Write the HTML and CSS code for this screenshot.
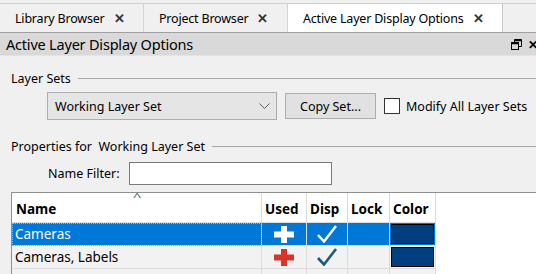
FILE: index.html
```
<!DOCTYPE html>
<html>
<head>
<meta charset="utf-8">
<link rel="stylesheet" href="styles.css">
</head>
<body>
<div class="tabbar">
  <div class="tab"><span class="tab-label">Library Browser</span><span class="tab-x">✕</span></div>
  <div class="tab"><span class="tab-label">Project Browser</span><span class="tab-x">✕</span></div>
  <div class="tab tab-active"><span class="tab-label">Active Layer Display Options</span><span class="tab-x">✕</span></div>
</div>
<div class="panel-head">
  <span class="panel-title">Active Layer Display Options</span>
  <span class="panel-tools">
    <svg class="restore" width="11" height="11" viewBox="0 0 11 11"><path d="M3.5 0.5h7v7h-3M3.5 0.5v3" fill="none" stroke="#000" stroke-width="1"/><path d="M3.5 1.5h7" stroke="#000" stroke-width="1.5"/><rect x="0.5" y="3.5" width="7" height="7" fill="none" stroke="#000"/><path d="M0.5 4.5h7" stroke="#000" stroke-width="1.5"/></svg>
    <span class="panel-x">✕</span>
  </span>
</div>
<div class="content">
  <div class="group-title"><span>Layer Sets</span><span class="rule"></span></div>
  <div class="set-row">
    <div class="combo"><span>Working Layer Set</span>
      <svg width="11" height="7" viewBox="0 0 11 7"><path d="M0.5 0.5l5 5 5-5" fill="none" stroke="#606060"/></svg>
    </div>
    <div class="button">Copy Set...</div>
    <div class="check"><span class="box"></span><span>Modify All Layer Sets</span></div>
  </div>
  <div class="group-title group-two"><span>Properties for&nbsp; Working Layer Set</span><span class="rule"></span></div>
  <div class="filter-row"><span>Name Filter:</span><span class="input"></span></div>
  <div class="grid">
    <div class="hc name-h">Name<span class="sort">^</span></div>
    <div class="hc">Used</div>
    <div class="hc">Disp</div>
    <div class="hc">Lock</div>
    <div class="hc">Color</div>
    <div class="filler"></div>

    <div class="c sel name focus">Cameras</div>
    <div class="c sel icon"><svg width="20" height="17" viewBox="0 0 20 17"><path d="M7 0h6v5.5h7v6h-7v5.5h-6v-5.5h-7v-6h7z" fill="#fff"/></svg></div>
    <div class="c sel icon"><svg width="20" height="18" viewBox="0 0 20 18"><path d="M1 10l6 6.5L19 1" fill="none" stroke="#fff" stroke-width="2.5"/></svg></div>
    <div class="c sel"></div>
    <div class="c sel swatch-cell"><span class="swatch"></span></div>
    <div class="filler"></div>

    <div class="c name">Cameras, Labels</div>
    <div class="c icon"><svg width="20" height="17" viewBox="0 0 20 17"><path d="M7 0h6v5.5h7v6h-7v5.5h-6v-5.5h-7v-6h7z" fill="#d8352a"/></svg></div>
    <div class="c icon"><svg width="20" height="18" viewBox="0 0 20 18"><path d="M1 10l6 6.5L19 1" fill="none" stroke="#1b5a78" stroke-width="2.6"/></svg></div>
    <div class="c"></div>
    <div class="c swatch-cell"><span class="swatch"></span></div>
    <div class="filler"></div>

    <div class="c tail"></div>
    <div class="c tail"></div>
    <div class="c tail"></div>
    <div class="c tail"></div>
    <div class="c tail"></div>
    <div class="filler"></div>
  </div>
</div>
</body>
</html>
```
FILE: styles.css
```
* { box-sizing: border-box; }
html, body { margin: 0; padding: 0; }
body {
  width: 536px;
  height: 274px;
  overflow: hidden;
  background: #f0f0f0;
  font-family: "Noto Sans", "Open Sans", sans-serif;
  font-size: 12.5px;
  color: #000;
}
.tabbar {
  display: flex;
  margin-top: 3px;
  height: 30px;
  border-top: 1px solid #cfcfcf;
  border-bottom: 1px solid #a0a0a0;
}
.tab {
  width: 144px;
  display: flex;
  align-items: center;
  padding-left: 15px;
  border-right: 1px solid #d4d4d4;
  background: #f0f0f0;
}
.tab-active {
  width: 215px;
  background: #fff;
  padding-left: 15px;
  border-right: 1px solid #c8c8c8;
}
.tab-label { letter-spacing: -0.2px; }
.tab-x {
  margin-left: 9px;
  font-size: 13px;
  font-weight: bold;
  color: #333;
}
.panel-head {
  height: 23px;
  background: #d9d9d9;
  border-bottom: 1px solid #e4e4e4;
  display: flex;
  align-items: center;
  padding-left: 6px;
}
.panel-title { font-size: 14.5px; letter-spacing: -0.2px; }
.panel-tools {
  margin-left: auto;
  display: flex;
  align-items: center;
  gap: 6px;
  margin-right: -2px;
}
.panel-x { font-size: 12px; font-weight: bold; }
.content { padding-left: 11px; }
.group-title {
  display: flex;
  align-items: center;
  margin-top: 13px;
  height: 18px;
}
.group-title .rule {
  flex: 1;
  height: 1px;
  background: #a8a8a8;
  margin-left: 7px;
}
.set-row {
  display: flex;
  align-items: center;
  margin-top: 5px;
  padding-left: 36px;
  height: 28px;
}
.combo {
  width: 230px;
  height: 28px;
  background: #e5e5e5;
  border: 1px solid #adadad;
  display: flex;
  align-items: center;
  justify-content: space-between;
  padding: 0 6px 0 7px;
}
.button {
  margin-left: 8px;
  width: 91px;
  height: 26px;
  background: #e1e1e1;
  border: 1px solid #adadad;
  display: flex;
  align-items: center;
  justify-content: center;
}
.check {
  display: flex;
  align-items: center;
  margin-left: 8px;
}
.box {
  width: 16px;
  height: 16px;
  border: 1px solid #333;
  background: #fff;
  margin-right: 6px;
}
.group-two { margin-top: 17px; }
.filter-row {
  display: flex;
  align-items: center;
  margin-top: 7px;
  padding-left: 37px;
  height: 23px;
}
.input {
  margin-left: 9px;
  width: 203px;
  height: 23px;
  background: #fff;
  border: 1px solid #7a7a7a;
}
.grid {
  margin-top: 7px;
  display: grid;
  grid-template-columns: 250px 45px 41px 42px 46px 1fr;
  grid-template-rows: 30px 23px 23px 10px;
  background: #fff;
  border-top: 1px solid #8e8f8f;
  border-left: 1px solid #8e8f8f;
}
.hc {
  font-weight: bold;
  font-size: 13.5px;
  display: flex;
  align-items: center;
  padding-left: 3px;
  padding-top: 2px;
  border-right: 1px solid #dcdcdc;
  border-bottom: 1px solid #dcdcdc;
  position: relative;
}
.name-h { padding-left: 4px; }
.sort {
  position: absolute;
  left: 122px;
  top: -4px;
  font-size: 11px;
  font-weight: normal;
  color: #666;
  transform: scaleX(1.4);
}
.c {
  background: #f2f2f2;
  border-right: 1px solid #dcdcdc;
  border-bottom: 1px solid #dcdcdc;
  display: flex;
  align-items: center;
  font-size: 13.5px;
}
.c.sel { background: #0078d7; color: #fff; }
.name { padding-left: 3px; }
.focus { outline: 1px dotted #f0a060; outline-offset: -1px; }
.icon { justify-content: center; }
.swatch-cell { padding: 1px; }
.swatch {
  display: block;
  width: 100%;
  height: 100%;
  background: #003f7f;
  border: 1px solid #000;
}
.tail { border-bottom: 0; }
.filler { background: #fff; }
```
